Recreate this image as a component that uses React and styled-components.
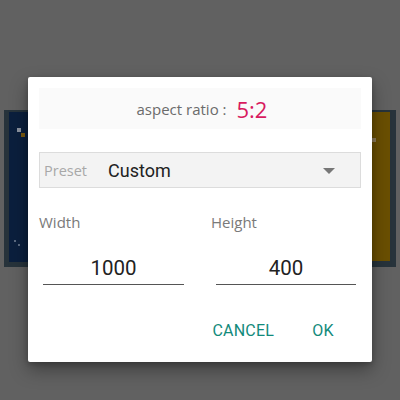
import React from "react";
import styled, { createGlobalStyle } from "styled-components";

const Global = createGlobalStyle`
  html, body { margin: 0; padding: 0; }
  body {
    width: 400px;
    height: 400px;
    overflow: hidden;
    background: #616161;
    font-family: Roboto, "Noto Sans", sans-serif;
  }
  #root { width: 400px; height: 400px; }
`;

const Page = styled.div`
  position: relative;
  width: 400px;
  height: 400px;
  padding-top: 110px;
  box-sizing: border-box;
`;

const Scene = styled.div`
  margin: 0 4px;
  height: 157px;
  background: #27333b;
  padding: 2px 6px 5px 5px;
  box-sizing: border-box;
  display: flex;
`;

const Navy = styled.div`
  position: relative;
  flex: 1;
  background: #0b1f3d;
`;

const Amber = styled.div`
  position: relative;
  width: 60px;
  background: #6a4f02;
  margin-bottom: 1px;
`;

const Dot = styled.span`
  position: absolute;
  width: ${(p) => p.$s}px;
  height: ${(p) => p.$s}px;
  background: ${(p) => p.$c};
`;

const Dialog = styled.div`
  position: absolute;
  left: 28px;
  top: 77px;
  width: 344px;
  height: 285px;
  background: #ffffff;
  border-radius: 2px;
  box-shadow: 0 8px 18px rgba(0, 0, 0, 0.35), 0 2px 5px rgba(0, 0, 0, 0.2);
  padding: 11px 11px 0 11px;
  box-sizing: border-box;
  display: flex;
  flex-direction: column;
`;

const RatioBox = styled.div`
  height: 41px;
  background: #fafafa;
  display: flex;
  align-items: center;
  justify-content: center;
  gap: 10px;
  padding-left: 4px;
`;

const RatioLabel = styled.span`
  font-family: "Open Sans", sans-serif;
  font-size: 15px;
  color: #6b6b6b;
  padding-top: 1px;
`;

const RatioValue = styled.span`
  font-family: "Open Sans", sans-serif;
  font-size: 22px;
  color: #d81b5f;
  line-height: 1;
`;

const Select = styled.div`
  margin-top: 23px;
  height: 36px;
  background: #f3f3f3;
  border: 1px solid #dcdcdc;
  box-sizing: border-box;
  display: flex;
  align-items: center;
  padding: 0 25px 0 4px;
`;

const SelectLabel = styled.span`
  font-family: "Open Sans", sans-serif;
  font-size: 14.5px;
  color: #a8a8a8;
  width: 64px;
`;

const SelectValue = styled.span`
  flex: 1;
  font-family: Roboto, sans-serif;
  font-size: 18px;
  color: #222222;
`;

const Caret = styled.span`
  width: 0;
  height: 0;
  margin-top: 1px;
  border-left: 6px solid transparent;
  border-right: 6px solid transparent;
  border-top: 6px solid #777777;
`;

const Fields = styled.div`
  margin-top: 24px;
  display: grid;
  grid-template-columns: 150px 150px;
  column-gap: 22px;
`;

const Field = styled.div`
  display: flex;
  flex-direction: column;
`;

const FieldLabel = styled.span`
  font-family: "Open Sans", sans-serif;
  font-size: 15px;
  color: #7a7a7a;
  line-height: 20px;
`;

const FieldInput = styled.div`
  margin: 22px ${(p) => p.$right}px 0 ${(p) => p.$left}px;
  height: 28px;
  border-bottom: 1px solid #555555;
  display: flex;
  align-items: center;
  justify-content: center;
  font-family: Roboto, sans-serif;
  font-size: 20.5px;
  color: #222222;
  padding-bottom: 2px;
`;

const Actions = styled.div`
  margin-top: 27px;
  display: flex;
  justify-content: flex-end;
  gap: 9px;
  padding-right: 6px;
`;

const TextButton = styled.button`
  min-width: 64px;
  height: 36px;
  padding: 0 8px;
  border: none;
  background: transparent;
  font-family: Roboto, sans-serif;
  font-size: 16px;
  color: #128a7b;
  letter-spacing: 0.2px;
  text-transform: uppercase;
  cursor: pointer;
`;

export default function App() {
  return (
    <>
      <Global />
      <Page>
        <Scene>
          <Navy>
            <Dot $s={4} $c="#8c93a0" style={{ left: 8, top: 16 }} />
            <Dot $s={4} $c="#7a5a10" style={{ left: 12, top: 21 }} />
            <Dot $s={2} $c="#5b6a80" style={{ left: 5, top: 128 }} />
            <Dot $s={2} $c="#5b6a80" style={{ left: 9, top: 132 }} />
          </Navy>
          <Amber>
            <Dot $s={4} $c="#8e7c5a" style={{ right: 14, top: 26 }} />
          </Amber>
        </Scene>
        <Dialog>
          <RatioBox>
            <RatioLabel>aspect ratio :</RatioLabel>
            <RatioValue>5:2</RatioValue>
          </RatioBox>
          <Select>
            <SelectLabel>Preset</SelectLabel>
            <SelectValue>Custom</SelectValue>
            <Caret />
          </Select>
          <Fields>
            <Field>
              <FieldLabel>Width</FieldLabel>
              <FieldInput $left={4} $right={5}>1000</FieldInput>
            </Field>
            <Field>
              <FieldLabel>Height</FieldLabel>
              <FieldInput $left={5} $right={5}>400</FieldInput>
            </Field>
          </Fields>
          <Actions>
            <TextButton>Cancel</TextButton>
            <TextButton>OK</TextButton>
          </Actions>
        </Dialog>
      </Page>
    </>
  );
}
